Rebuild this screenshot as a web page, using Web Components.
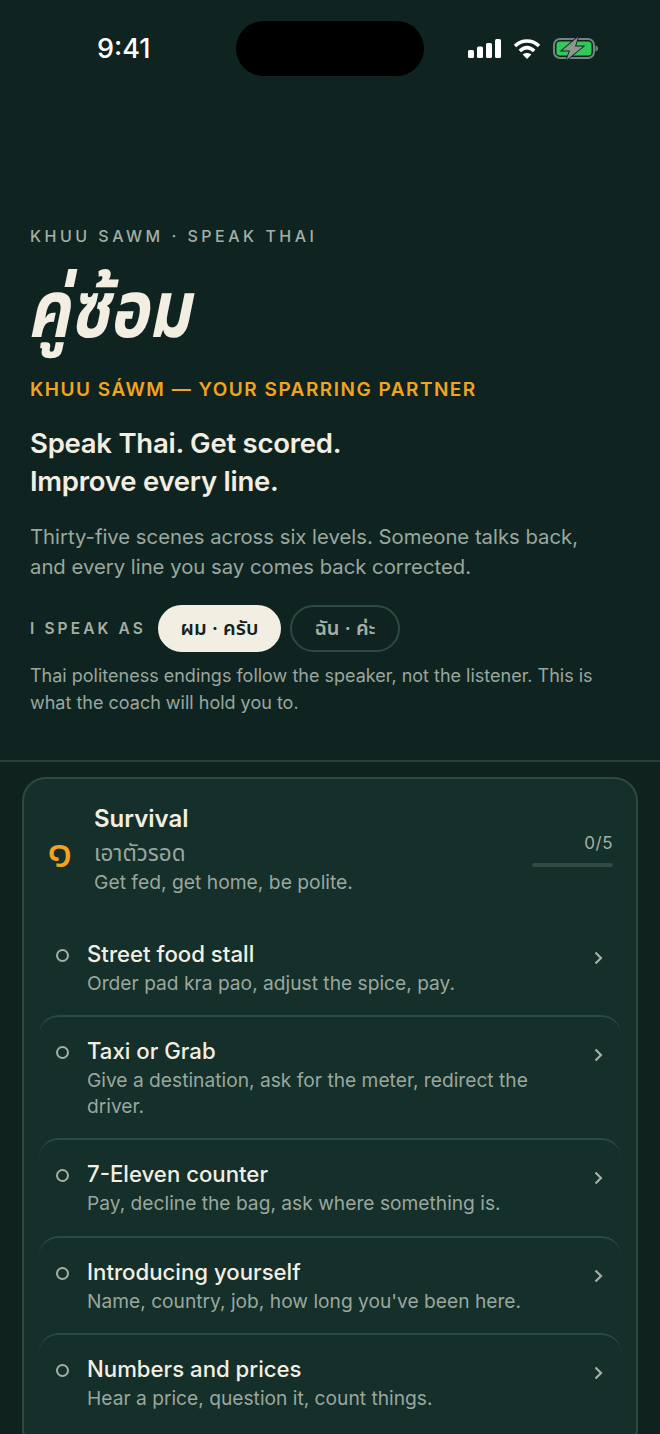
<!DOCTYPE html>
<html lang="en">
<head>
<meta charset="utf-8">
<title>Khuu Sawm</title>
<style>
  html, body { margin: 0; padding: 0; background: #0f2421; }
  body {
    height: 1434px;
    overflow: hidden;
    color: #f3eee2;
    font-family: Inter, "Noto Sans", "Noto Sans Thai", "Liberation Sans", sans-serif;
  }
</style>
</head>
<body>
<status-bar></status-bar>
<hero-intro>
  <speaker-toggle></speaker-toggle>
</hero-intro>
<level-list>
  <level-card numeral="๑" title="Survival" thai="เอาตัวรอด" blurb="Get fed, get home, be polite." progress="0/5">
    <scene-row title="Street food stall" first>Order pad kra pao, adjust the spice, pay.</scene-row>
    <scene-row title="Taxi or Grab">Give a destination, ask for the meter, redirect the driver.</scene-row>
    <scene-row title="7-Eleven counter">Pay, decline the bag, ask where something is.</scene-row>
    <scene-row title="Introducing yourself">Name, country, job, how long you've been here.</scene-row>
    <scene-row title="Numbers and prices">Hear a price, question it, count things.</scene-row>
  </level-card>
</level-list>

<script>
class StatusBar extends HTMLElement {
  constructor() {
    super();
    let shadowRoot = this.attachShadow({mode: 'open'});
    shadowRoot.innerHTML = `
    <style>
      :host { display: block; height: 97px; }
      .bar { display: grid; grid-template-columns: 139px 188px 1fr; padding: 21px 62px 0 97px; }
      .time { font-size: 27px; font-weight: 500; line-height: 55px; color: #fff; }
      .island { height: 55px; border-radius: 28px; background: #000; }
      .icons { display: flex; align-items: center; justify-content: flex-end; gap: 12px; height: 55px; }
      svg { display: block; overflow: visible; }
    </style>
    <div class="bar">
      <span class="time">9:41</span>
      <div class="island"></div>
      <div class="icons">
        <svg width="33" height="19" viewBox="0 0 33 19"><g fill="#fff">
          <rect x="0" y="11" width="6" height="8" rx="1.5"/><rect x="9" y="7.500" width="6" height="11.500" rx="1.5"/>
          <rect x="18" y="4" width="6" height="15" rx="1.5"/><rect x="27" y="0" width="6" height="19" rx="1.5"/></g></svg>
        <svg width="28" height="21" viewBox="0 0 28 21" fill="none" stroke="#fff" stroke-width="3.600">
          <path d="M2 8C9.200 1.400 18.800 1.400 26 8"/><path d="M6.800 13C11.400 8.800 16.600 8.800 21.200 13"/>
          <path d="M14 21l-4.300-4.600c2.600-2 6-2 8.600 0z" fill="#fff" stroke="none"/></svg>
        <svg width="45" height="21" viewBox="0 0 45 21">
          <rect x="1" y="1" width="40" height="19" rx="6" fill="none" stroke="#75847e" stroke-width="2"/>
          <path d="M42.500 7.500c1.600 .4 2.500 1.500 2.500 3s-.9 2.600-2.500 3z" fill="#75847e"/>
          <rect x="3.500" y="3.500" width="35" height="14" rx="3.500" fill="#34c759"/>
          <path d="M25 -1L9 12.500h8L13.500 22 30 8.500h-8z" fill="#8b9691" stroke="#0f2421" stroke-width="1.800" paint-order="stroke"/>
        </svg>
      </div>
    </div>
    `;
  }
}
customElements.define('status-bar', StatusBar);

class HeroIntro extends HTMLElement {
  constructor() {
    super();
    let shadowRoot = this.attachShadow({mode: 'open'});
    shadowRoot.innerHTML = `
    <style>
      :host { display: block; padding: 123px 30px 44px; border-bottom: 2px solid #263f39; }
      .eyebrow { font-size: 16px; line-height: 32px; font-weight: 500; letter-spacing: 3.500px; color: #a4afa5; }
      h1 { margin: 0 0 0 -3px; height: 123px; font-size: 80px; line-height: 122px; font-weight: 700; font-style: italic; color: #f3eee2;
           font-family: "Noto Sans Thai", "Noto Serif Thai", "Noto Sans", "DejaVu Sans", sans-serif;
           transform: scaleX(.82); transform-origin: left center; }
      .tag { font-size: 19px; line-height: 30px; font-weight: 600; letter-spacing: 1.500px; color: #f2a41f; }
      h2 { margin: 19px 0 0; font-size: 27.500px; line-height: 38px; font-weight: 600; color: #f3eee2; letter-spacing: -0.250px; }
      p { margin: 22px 0 0; max-width: 570px; font-size: 20.300px; line-height: 30px; color: #9aa79e; }
    </style>
    <div class="eyebrow">KHUU SAWM · SPEAK THAI</div>
    <h1>คู่ซ้อม</h1>
    <div class="tag">KHUU SÁWM — YOUR SPARRING PARTNER</div>
    <h2>Speak Thai. Get scored.<br>Improve every line.</h2>
    <p>Thirty-five scenes across six levels. Someone talks back, and every line you say comes back corrected.</p>
    <slot></slot>
    `;
  }
}
customElements.define('hero-intro', HeroIntro);

class SpeakerToggle extends HTMLElement {
  constructor() {
    super();
    let shadowRoot = this.attachShadow({mode: 'open'});
    shadowRoot.innerHTML = `
    <style>
      :host { display: block; margin-top: 23px; }
      .row { display: flex; align-items: center; }
      .label { font-size: 15.500px; font-weight: 600; letter-spacing: 3.100px; color: #a4afa5; width: 128px; }
      button { height: 47px; border-radius: 24px; border: 2px solid #2c4a42; background: none; color: #a4afa5;
               font: 600 20px Inter, "Noto Sans", "Noto Sans Thai", sans-serif; padding: 0; }
      .on { width: 123px; background: #f3eee2; border-color: #f3eee2; color: #10241f; margin-right: 9px; }
      .off { width: 110px; }
      p { margin: 10px 0 0; font-size: 18px; line-height: 27px; color: #9aa79e; }
    </style>
    <div class="row">
      <span class="label">I SPEAK AS</span>
      <button class="on">ผม · ครับ</button>
      <button class="off">ฉัน · ค่ะ</button>
    </div>
    <p>Thai politeness endings follow the speaker, not the listener. This is what the coach will hold you to.</p>
    `;
  }
}
customElements.define('speaker-toggle', SpeakerToggle);

class LevelList extends HTMLElement {
  constructor() {
    super();
    let shadowRoot = this.attachShadow({mode: 'open'});
    shadowRoot.innerHTML = `
    <style>
      :host { display: block; padding: 15px 22px 0; background: #0f221e; }
    </style>
    <slot></slot>
    `;
  }
}
customElements.define('level-list', LevelList);

class LevelCard extends HTMLElement {
  constructor() {
    super();
    let shadowRoot = this.attachShadow({mode: 'open'});
    shadowRoot.innerHTML = `
    <style>
      :host { display: block; background: #152f2a; border: 2px solid #2c4a42; border-radius: 24px; padding: 0 15px 20px; }
      .head { display: flex; align-items: center; height: 138.500px; padding: 0 8px 0 10px; }
      .num { width: 47px; height: 40px; margin-left: -2px; font-size: 47px; line-height: 40px; color: #f2a41f; margin-top: 4px; }
      .text { flex: 1; padding-top: 1px; }
      .title { font-size: 24px; line-height: 34px; font-weight: 600; color: #f3eee2; }
      .thai { font-size: 22.500px; line-height: 34px; color: #9aa79e; }
      .blurb { font-size: 19.300px; line-height: 25px; color: #9aa79e; }
      .prog { width: 81px; padding-top: 1px; text-align: right; font-size: 17px; line-height: 24px; letter-spacing: .5px; color: #a4afa5; }
      .track { height: 4px; border-radius: 2px; background: #2f4b43; margin-top: 8px; }
    </style>
    <div class="head">
      <div class="num">${this.getAttribute('numeral')}</div>
      <div class="text">
        <div class="title">${this.getAttribute('title')}</div>
        <div class="thai">${this.getAttribute('thai')}</div>
        <div class="blurb">${this.getAttribute('blurb')}</div>
      </div>
      <div class="prog">${this.getAttribute('progress')}<div class="track"></div></div>
    </div>
    <slot></slot>
    `;
  }
}
customElements.define('level-card', LevelCard);

class SceneRow extends HTMLElement {
  constructor() {
    super();
    let shadowRoot = this.attachShadow({mode: 'open'});
    shadowRoot.innerHTML = `
    <style>
      :host { display: block; border-top: 2px solid #2c4a42; border-radius: 20px 20px 0 0; padding: 19px 17px 19px 16px; }
      :host([first]) { border-top-color: transparent; }
      .row { display: grid; grid-template-columns: 32px 1fr 21px; }
      .dot { width: 13px; height: 13px; box-sizing: border-box; border: 2.500px solid #a4afa5; border-radius: 50%; margin: 10px 0 0 1px; }
      .title { font-size: 22.200px; line-height: 30px; font-weight: 500; color: #f3eee2; }
      .sub { padding-top: 2px; font-size: 19.200px; line-height: 25.500px; color: #9aa79e; padding-right: 40px; }
      svg { display: block; margin: 12px 0 0 11px; }
    </style>
    <div class="row">
      <div class="dot"></div>
      <div>
        <div class="title">${this.getAttribute('title')}</div>
        <div class="sub"><slot></slot></div>
      </div>
      <svg width="9" height="14" viewBox="0 0 9 14" fill="none" stroke="#a4afa5" stroke-width="2.200"><path d="M1.500 1.500L7 7l-5.500 5.500"/></svg>
    </div>
    `;
  }
}
customElements.define('scene-row', SceneRow);
</script>
</body>
</html>
